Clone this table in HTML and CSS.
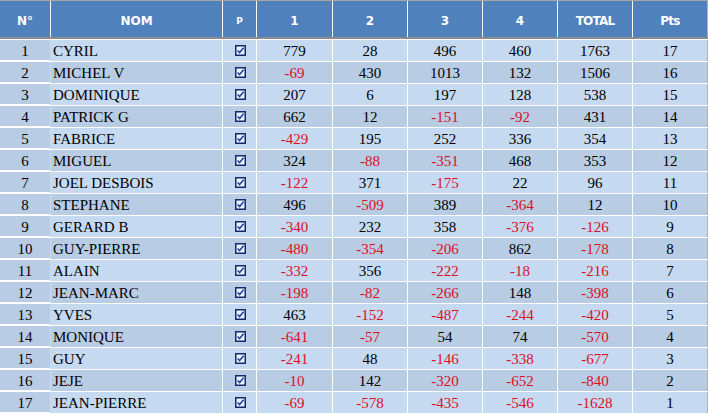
FILE: index.html
```html
<!DOCTYPE html>
<html>
<head>
<meta charset="utf-8">
<link rel="stylesheet" href="styles.css">
</head>
<body>
<div class="sheet">
  <div class="row head">
    <div class="c n">N°</div>
    <div class="c nom">NOM</div>
    <div class="c p small">P</div>
    <div class="c">1</div>
    <div class="c">2</div>
    <div class="c">3</div>
    <div class="c">4</div>
    <div class="c tight">TOTAL</div>
    <div class="c tight">Pts</div>
  </div>
  <div class="sep"></div>
  <div id="rows"></div>
</div>
<template id="chk"><svg class="chk" width="11" height="11" viewBox="0 0 11 11"><rect x="0.75" y="0.75" width="9.5" height="9.5" fill="#eef2fa" stroke="#122b6b" stroke-width="1.5"/><path d="M2.6 5.4 L4.6 7.6 L8.6 2.8" fill="none" stroke="#1c3f9e" stroke-width="1.5"/></svg></template>
<script src="app.js"></script>
</body>
</html>
```
FILE: app.js
```js
const data = [
  [1,"CYRIL",779,28,496,460,1763,17],
  [2,"MICHEL V",-69,430,1013,132,1506,16],
  [3,"DOMINIQUE",207,6,197,128,538,15],
  [4,"PATRICK G",662,12,-151,-92,431,14],
  [5,"FABRICE",-429,195,252,336,354,13],
  [6,"MIGUEL",324,-88,-351,468,353,12],
  [7,"JOEL DESBOIS",-122,371,-175,22,96,11],
  [8,"STEPHANE",496,-509,389,-364,12,10],
  [9,"GERARD B",-340,232,358,-376,-126,9],
  [10,"GUY-PIERRE",-480,-354,-206,862,-178,8],
  [11,"ALAIN",-332,356,-222,-18,-216,7],
  [12,"JEAN-MARC",-198,-82,-266,148,-398,6],
  [13,"YVES",463,-152,-487,-244,-420,5],
  [14,"MONIQUE",-641,-57,54,74,-570,4],
  [15,"GUY",-241,48,-146,-338,-677,3],
  [16,"JEJE",-10,142,-320,-652,-840,2],
  [17,"JEAN-PIERRE",-69,-578,-435,-546,-1628,1]
];
const host = document.getElementById('rows');
const chk = document.getElementById('chk').innerHTML;
data.forEach((r, i) => {
  const row = document.createElement('div');
  row.className = 'row body ' + (i % 2 ? 'even' : 'odd');
  let h = `<div class="c n">${r[0]}</div><div class="c nom">${r[1]}</div><div class="c p">${chk}</div>`;
  for (let k = 2; k <= 6; k++) {
    h += `<div class="c${r[k] < 0 ? ' neg' : ''}">${r[k]}</div>`;
  }
  h += `<div class="c">${r[7]}</div>`;
  row.innerHTML = h;
  host.appendChild(row);
});
```
FILE: styles.css
```css
html, body {
  margin: 0;
  padding: 0;
  background: #ffffff;
}
.sheet {
  width: 708px;
  border-top: 1px solid #a6a6a6;
  background: #ffffff;
}
.row {
  display: grid;
  grid-template-columns: 50px 171px 33px 75px 74px 74px 74px 74px 74px;
  column-gap: 1px;
  width: 707px;
  border-right: 1px solid #b0b0b0;
}
.head {
  height: 36px;
  background: #ffffff;
}
.head .c {
  background: #4f81bd;
  color: #ffffff;
  font-family: "DejaVu Sans", sans-serif;
  font-weight: bold;
  font-size: 12px;
  display: flex;
  align-items: center;
  justify-content: center;
  padding-top: 4px;
  box-sizing: border-box;
}
.head .small {
  font-size: 9px;
}
.head .tight {
  letter-spacing: -0.8px;
}
.sep {
  height: 2px;
  border-bottom: 1px solid #ffffff;
  background: #8c8c8c;
  width: 708px;
}
.body {
  height: 21px;
  margin-bottom: 1px;
  background: #ffffff;
}
.body .c {
  font-family: "Liberation Serif", "Times New Roman", Times, "DejaVu Serif", serif;
  font-size: 15px;
  line-height: 21px;
  padding-top: 1px;
  height: 21px;
  box-sizing: border-box;
  text-align: center;
  color: #000000;
}
.odd .c { background: #c5d9f1; }
.even .c { background: #b8cce4; }
.body .n {
  background: #b8cce4 !important;
  height: 20px;
  line-height: 20px;
}
.body .nom {
  text-align: left;
  padding-left: 2px;
  box-shadow: -1px 0 0 #c9dbf2;
}
.body .p {
  display: flex;
  justify-content: center;
  align-items: center;
  padding-top: 0;
}
.chk {
  display: block;
  margin-left: 1px;
}
.body .neg {
  color: #dc0f1f;
}
```
